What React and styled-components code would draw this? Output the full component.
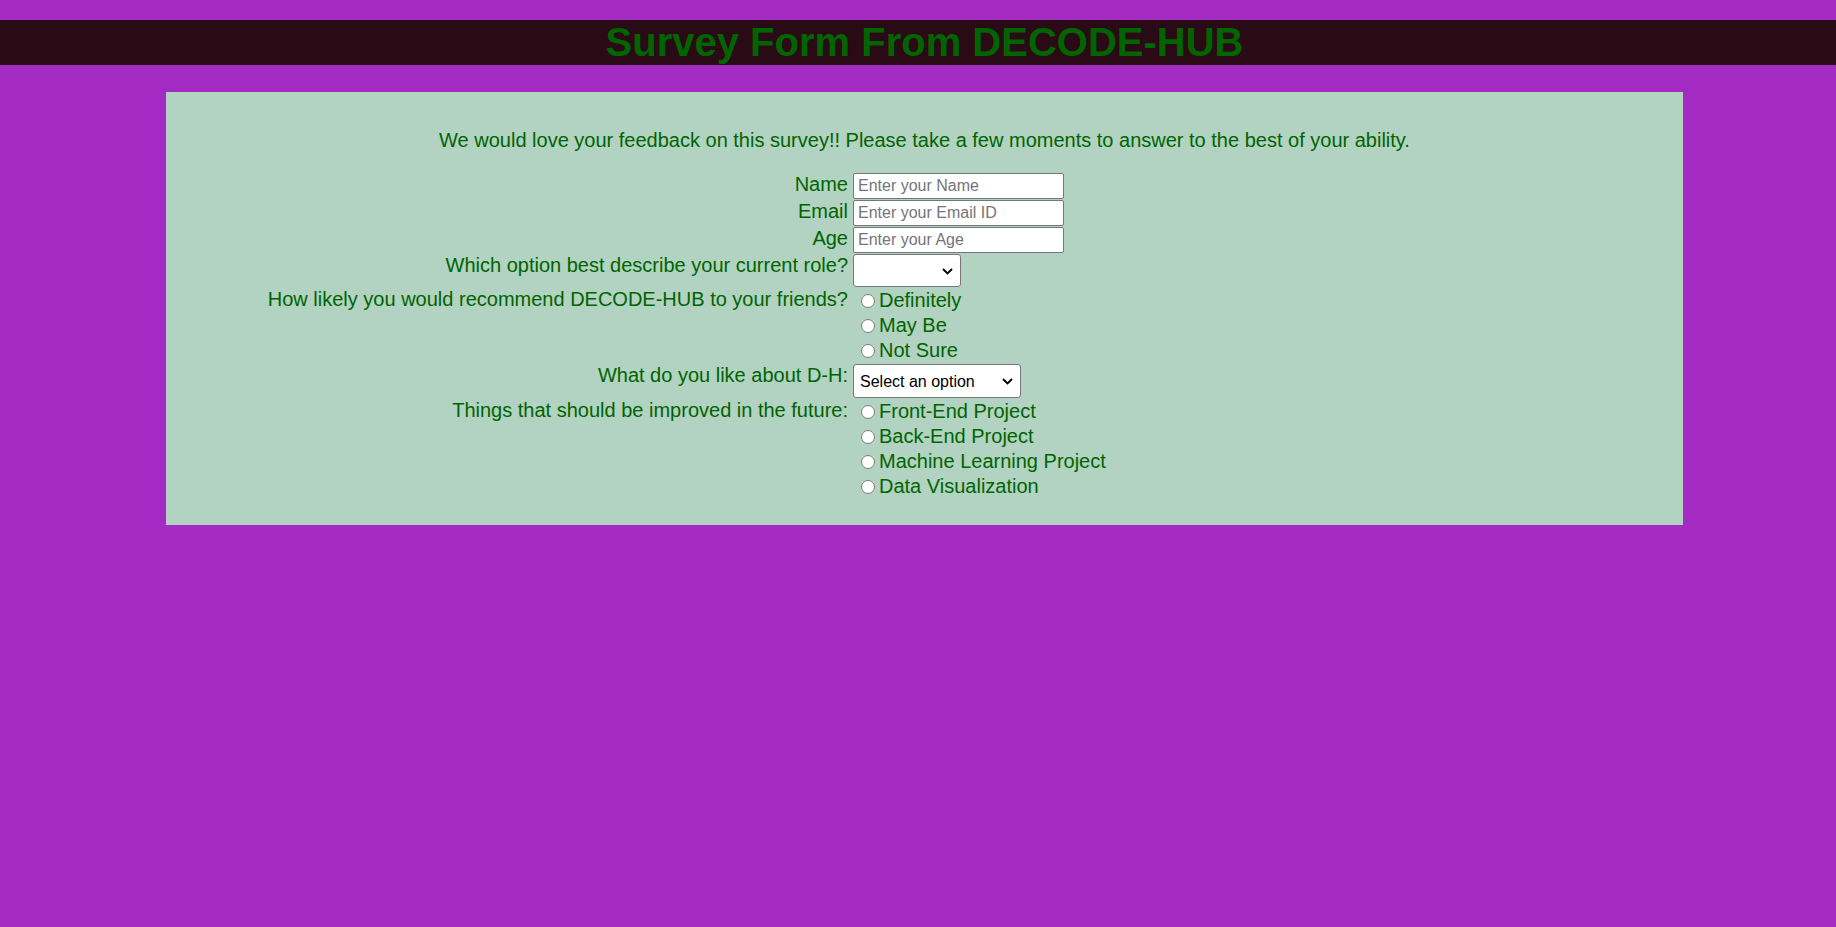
import React from 'react';
import styled, { createGlobalStyle } from 'styled-components';

const GlobalStyle = createGlobalStyle`
  body {
    margin: 0;
    background: #a42ac4;
    font-family: "Liberation Sans", Arial, sans-serif;
  }
`;

const Title = styled.h1`
  margin: 20px 0 0;
  padding-left: 13px;
  height: 45px;
  line-height: 45px;
  background: #290a15;
  color: #006400;
  font-size: 40px;
  font-weight: bold;
  text-align: center;
`;

const Card = styled.div`
  margin: 27px 153px 0 166px;
  padding: 37px 0 26px;
  background: #b2d3c2;
  color: #006400;
`;

const Intro = styled.p`
  margin: 0 0 21px;
  font-size: 20px;
  line-height: 23px;
  text-align: center;
`;

const FormGrid = styled.form`
  display: grid;
  grid-template-columns: 682px 1fr;
  column-gap: 5px;
  row-gap: 1px;
  align-items: start;
`;

const Label = styled.label`
  font-size: 20px;
  line-height: 23px;
  text-align: right;
  white-space: nowrap;
`;

const TextInput = styled.input`
  box-sizing: border-box;
  width: 211px;
  height: 26px;
  padding: 1px 4px;
  border: 1px solid #767676;
  border-radius: 2px;
  background: #fff;
  font-family: "Liberation Sans", Arial, sans-serif;
  font-size: 16px;
  color: #000;
  &::placeholder {
    color: #757575;
  }
`;

const SelectWrap = styled.div`
  position: relative;
  width: ${p => p.$width}px;
  height: ${p => p.$height}px;
`;

const Select = styled.select`
  appearance: none;
  box-sizing: border-box;
  width: 100%;
  height: 100%;
  padding: 0 24px 0 6px;
  border: 1px solid #767676;
  border-radius: 3px;
  background: #fff;
  color: #000;
  font-family: "Liberation Sans", Arial, sans-serif;
  font-size: 16px;
`;

const Chevron = styled.svg`
  position: absolute;
  right: 8px;
  top: 50%;
  margin-top: -3px;
  pointer-events: none;
`;

const RadioGroup = styled.div`
  display: flex;
  flex-direction: column;
`;

const Option = styled.label`
  display: flex;
  align-items: center;
  height: 25px;
  font-size: 20px;
  line-height: 23px;
  white-space: nowrap;
`;

const Radio = styled.input`
  width: 14px;
  height: 14px;
  margin: 0 4px 0 8px;
`;

const recommend = ['Definitely', 'May Be', 'Not Sure'];
const improve = ['Front-End Project', 'Back-End Project', 'Machine Learning Project', 'Data Visualization'];

const DropDown = ({ id, width, height, children, defaultValue }) => (
  <SelectWrap $width={width} $height={height}>
    <Select id={id} defaultValue={defaultValue}>{children}</Select>
    <Chevron width="11" height="7" viewBox="0 0 11 7">
      <path d="M1 1l4.5 4.5L10 1" fill="none" stroke="#000" strokeWidth="1.8" />
    </Chevron>
  </SelectWrap>
);

const App = () => (
  <>
    <GlobalStyle />
    <Title>Survey Form From DECODE-HUB</Title>
    <Card>
      <Intro>
        We would love your feedback on this survey!! Please take a few moments to answer to the best of your ability.
      </Intro>
      <FormGrid onSubmit={e => e.preventDefault()}>
        <Label htmlFor="name">Name</Label>
        <TextInput id="name" type="text" placeholder="Enter your Name" />

        <Label htmlFor="email">Email</Label>
        <TextInput id="email" type="email" placeholder="Enter your Email ID" />

        <Label htmlFor="age">Age</Label>
        <TextInput id="age" type="number" placeholder="Enter your Age" />

        <Label htmlFor="role">Which option best describe your current role?</Label>
        <DropDown id="role" width={108} height={33} defaultValue="">
          <option value=""></option>
          <option value="student"></option>
          <option value="pro"></option>
        </DropDown>

        <Label>How likely you would recommend DECODE-HUB to your friends?</Label>
        <RadioGroup>
          {recommend.map(r => (
            <Option key={r}>
              <Radio type="radio" name="recommend" value={r} />
              {r}
            </Option>
          ))}
        </RadioGroup>

        <Label htmlFor="like">What do you like about D-H:</Label>
        <DropDown id="like" width={168} height={34} defaultValue="none">
          <option value="none">Select an option</option>
          <option value="projects">Projects</option>
          <option value="community">Community</option>
        </DropDown>

        <Label>Things that should be improved in the future:</Label>
        <RadioGroup>
          {improve.map(r => (
            <Option key={r}>
              <Radio type="radio" name="improve" value={r} />
              {r}
            </Option>
          ))}
        </RadioGroup>
      </FormGrid>
    </Card>
  </>
);

export default App;
